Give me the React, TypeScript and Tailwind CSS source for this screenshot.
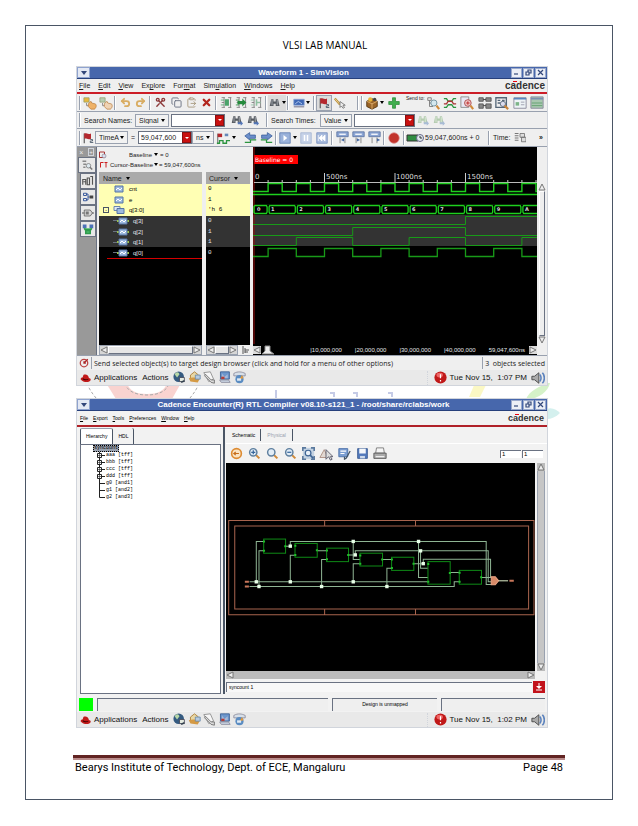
import React, { useState } from "react";
import clsx from "clsx";
import { Scissors, Copy, ClipboardPaste, X, Undo2, Redo2 } from "lucide-react";

const NS = 0.141;
const END = 284;

const Glyph: React.FC<{ children: React.ReactNode; className?: string }> = ({ children, className }) => (
  <svg viewBox="0 0 16 16" className={clsx("shrink-0", className ?? "size-3")} fill="none">
    {children}
  </svg>
);

const Binoculars = ({ dim = false, arrow = true }: { dim?: boolean; arrow?: boolean }) => (
  <Glyph>
    <path d="M3 3h3v3h3V3h3l2 9H9V9H6v3H1z" fill={dim ? "#b4ccb0" : "#555a60"} />
    <path d="M4 4v7M11 4v7" stroke={dim ? "#e4eee2" : "#b8bcc2"} />
    {arrow && <path d="M9 11h4v-2l3 3.500-3 3v-2H9z" fill={dim ? "#a9bcd6" : "#5577b8"} />}
  </Glyph>
);

const Magnifier = ({ sign }: { sign?: string }) => (
  <Glyph className="size-[13px]">
    <path d="m10 10 4 4" stroke="#d08a3a" strokeWidth="2.500" />
    <circle cx="6.500" cy="6.500" r="4.500" fill="#e2edf7" stroke="#5e7f9f" strokeWidth="1.800" />
    {sign && <path d={sign} stroke="#35659c" strokeWidth="1.500" />}
  </Glyph>
);

const Flag = () => (
  <Glyph>
    <path d="M3 2v13" stroke="#555" strokeWidth="1.500" />
    <path d="M3 2c3-1 5 2 9 0v7c-4 2-6-1-9 0z" fill="#b5282e" />
    <path d="M11 10h3v2h-3v2h4" stroke="#345" />
  </Glyph>
);

const Hand = ({ faded = false }: { faded?: boolean }) => (
  <Glyph className="size-[14px]">
    <path d="M1 2h6v5H1z" fill={faded ? "#b6cdb2" : "#e8ba3e"} stroke="#8f9a68" strokeWidth=".8" />
    <path d="M4 8v3h3" stroke="#888" />
    <path d="M6 9l3-3 1 2 4 1c2 1 1 5-1 6H9l-3-3z" fill={faded ? "#efd3b4" : "#efb267"} stroke="#b77a3a" strokeWidth=".8" />
  </Glyph>
);

const Align = ({ color, kind }: { color: string; kind: number }) => (
  <Glyph className="size-[13px]">
    <path d="M2 2h4M2 8h3M2 14h4M10 2h4M10 14h4M5 2v12M13 2v12" stroke="#777" />
    <path
      d={kind === 0 ? "M6 4h5v8H6z" : kind === 1 ? "M3 6h6V3l5 5-5 5v-3H3z" : "M7 4h2v3h4v2H9v3H7z"}
      fill={color}
    />
    <path d="M1 5h4M1 11h4" stroke={color} />
  </Glyph>
);

const Pointer = () => (
  <Glyph>
    <path d="M1 2l7 8" stroke="#b98d32" strokeWidth="3" />
    <path d="M1 2l7 8" stroke="#f0ddb0" strokeWidth="1" />
    <path d="M8 6v8l2-2 2 3 2-1-2-3h3z" fill="#eee" stroke="#666" />
  </Glyph>
);

const StepIcon = ({ dir }: { dir: string }) => (
  <Glyph className="size-[13px]">
    <path d="M1 1h14v6H1z" fill="#8ba5d4" stroke="#57709e" />
    <path d="M4 4h8" stroke="#fff" strokeWidth="1.500" />
    <path d="M5 8v7M11 8v7" stroke="#777" />
    <path d={dir} fill="#4468a4" />
  </Glyph>
);

const Sep = () => <span className="mx-px h-3.5 w-0.5 shrink-0 border-l border-gray-400 bg-white" />;
const Caret = () => <span className="block h-0 w-0 shrink-0 border-x-2 border-t-3 border-x-transparent border-t-black" />;

const ToolButton: React.FC<{ label: string; children: React.ReactNode; className?: string }> = ({ label, children, className }) => (
  <button aria-label={label} className={clsx("flex h-4 shrink-0 items-center justify-center", className ?? "w-4")}>
    {children}
  </button>
);

const Select: React.FC<{ id: string; label: string; options: string[]; className: string }> = ({ id, label, options, className }) => (
  <span className={clsx("relative flex h-[13px] shrink-0 items-center border border-gray-400 bg-[#f2f2f2]", className)}>
    <select id={id} aria-label={label} className="h-full w-full appearance-none bg-transparent pl-[3px] leading-none outline-none">
      {options.map(o => <option key={o}>{o}</option>)}
    </select>
    <span className="pointer-events-none absolute inset-y-0 right-[3px] flex items-center"><Caret /></span>
  </span>
);

const Entry: React.FC<{ label: string; initial?: string; className: string }> = ({ label, initial = "", className }) => {
  const [value, setValue] = useState(initial);
  return (
    <span className={clsx("flex h-[13px] shrink-0 items-center border border-gray-500 bg-white", className)}>
      <input
        aria-label={label}
        value={value}
        onChange={e => setValue(e.target.value)}
        className="h-full min-w-0 flex-1 pl-0.5 leading-none outline-none"
      />
      <button aria-label={`${label} history`} className="flex h-full w-[9px] items-center justify-center border border-[#8a1010] bg-[#c91010]">
        <span className="h-0 w-0 border-x-2 border-t-2 border-x-transparent border-t-white" />
      </button>
    </span>
  );
};

const TitleBar = ({ title }: { title: string }) => (
  <header className="flex h-3 items-center border-b border-[#27407c] bg-[#4767ac] text-white">
    <button aria-label="Window menu" className="flex h-full w-[13px] items-center justify-center border border-[#8fa3cf] bg-[#e4e9f4]">
      <svg viewBox="0 0 6 4" className="h-1 w-1.5"><path d="M0 0h6L3 4z" fill="#33477a" /></svg>
    </button>
    <h2 className="flex-1 pl-1.5 text-center text-[8px] leading-none font-bold">{title}</h2>
    {["M1 5h4", "M1 3h3v3H1zM3 3V1h3v3H4", "M1 1l5 5M6 1L1 6"].map((d, i) => (
      <button key={d} aria-label={["Minimize", "Restore", "Close"][i]} className="mr-px flex h-2.5 w-[11px] items-center justify-center border border-[#9aa9cc] bg-[#eceff6]">
        <svg viewBox="0 0 7 7" className="size-[7px]" fill="none"><path d={d} stroke="#33477a" strokeWidth="1.200" /></svg>
      </button>
    ))}
  </header>
);

const Logo = ({ className }: { className: string }) => (
  <span className={clsx("ml-auto leading-none font-bold text-[#333]", className)}>
    c<span className="relative">a<span className="absolute top-px left-0.5 h-px w-[4px] bg-red-600" /></span>dence
  </span>
);

const MenuBar: React.FC<{ items: [string, number][]; className: string }> = ({ items, className }) => (
  <nav className={clsx("flex items-center", className)}>
    {items.map(([text, n]) => (
      <button key={text}>
        {text.slice(0, n)}<u>{text[n]}</u>{text.slice(n + 1)}
      </button>
    ))}
  </nav>
);

const Taskbar = ({ time }: { time: string }) => (
  <footer className="flex h-[15px] items-center bg-[#e9e9e9] text-[8px] text-[#111]">
    <Glyph className="mx-[3px] h-3 w-[11px]">
      <path d="M1 10c0-3 2-2 3-3 1-5 2-4 4-4s4 1 5 5c3 1 3 2 2 4-3 3-11 2-14-2z" fill="#c11a1a" />
      <path d="M4 9c2 2 5 2 8 1" stroke="#400" strokeWidth="1.500" />
    </Glyph>
    <button>Applications</button>
    <button className="mr-1 ml-[5px]">Actions</button>
    <div className="flex gap-px">
      <ToolButton label="Browser" className="w-[14px]">
        <Glyph className="size-[13px]">
          <circle cx="7" cy="7" r="6.500" fill="#345a80" /><path d="M2 4c3-4 5-2 6 0L5 8z" fill="#b8d8a8" />
          <path d="M8 8h6v5H8z" fill="#e4eae0" stroke="#445" /><path d="M10 14l4-2" stroke="#34424f" strokeWidth="2" />
        </Glyph>
      </ToolButton>
      <ToolButton label="Mail" className="w-[14px]">
        <Glyph className="size-[13px]">
          <path d="M3 5l5-4 5 4v6H3z" fill="#e8d7a5" stroke="#a6772c" /><path d="M1 9c4-2 9-1 13 1l-2 4-9-1z" fill="#d49a45" />
          <path d="M9 5h6v5H9z" fill="#b6cbe0" stroke="#6888a8" />
        </Glyph>
      </ToolButton>
      <ToolButton label="Writer" className="w-[14px]">
        <Glyph className="size-[13px]">
          <path d="M1 2l8-1 4 9-6 3z" fill="#f6f6f6" stroke="#888" /><path d="M3 4l7 7h4v4l-4-1-8-8z" fill="#ddd" stroke="#666" />
        </Glyph>
      </ToolButton>
      <ToolButton label="Presentation" className="w-[14px]">
        <Glyph className="size-[13px]">
          <path d="M3 1h11v9H3z" fill="#6d97cc" stroke="#33588d" /><path d="M5 3l3 4 4-3v5H5z" fill="#a5b9d8" /><path d="M4 7h4v3H4z" fill="#b53d36" /><path d="M2 11h11l2 3H4z" fill="#c8d3e2" stroke="#889" />
        </Glyph>
      </ToolButton>
      <ToolButton label="Spreadsheet" className="w-[14px]">
        <Glyph className="size-[13px]">
          <path d="M1 3c5-3 10-2 14 0v3H1z" fill="#d7dfe8" stroke="#889" /><circle cx="8" cy="10" r="5" fill="#5a8cc2" /><path d="M8 10l3-5 2 4z" fill="#e29a3c" /><path d="M5 9h5v3H5z" fill="#e1ebf5" />
        </Glyph>
      </ToolButton>
    </div>
    <span className="ml-auto mr-0.5 h-3.5 border-l border-dotted border-gray-300" />
    <Glyph className="mr-0.5 ml-1 size-[13px]">
      <circle cx="8" cy="8" r="7.500" fill="#c01818" /><ellipse cx="7" cy="5" rx="4" ry="3" fill="#e66" /><path d="M8 4v5M8 11v2" stroke="#fff" strokeWidth="1.500" />
    </Glyph>
    <time className="whitespace-pre">{time}</time>
    <Glyph className="mr-0.5 ml-1 size-[14px]">
      <path d="M1 6h3l5-4v12l-5-4H1z" fill="#aaa" stroke="#444" /><path d="M10 4c2 2 2 6 0 8M13 2c3 3 3 9 0 12" stroke="#5b82bd" strokeWidth="1.800" />
    </Glyph>
  </footer>
);

// square wave that starts low and flips at every listed time
function wave(toggles: number[], low: number, high: number) {
  let level = low;
  let d = `M0 ${low}`;
  toggles.forEach(t => {
    level = level === low ? high : low;
    d += `H${t * NS + 1}V${level}`;
  });
  return `${d}H${END}`;
}

const everyHundred = Array.from({ length: 20 }, (_, i) => (i + 1) * 100);
const busTimes = [100, 300, 500, 700, 900, 1100, 1300, 1500, 1700, 1900];

const Waveform = () => (
  <svg viewBox="0 0 284 197" preserveAspectRatio="xMinYMin slice" className="h-[197px] w-full bg-black font-['DejaVu_Sans']" fill="none">
    <path d="M0 68h284v31H0z" fill="#333" />
    <path d="M1 8h44v9H1z" fill="#f00" />
    <text x="2" y="15" fontSize="6" fill="#fff">Baseline = 0</text>
    <path d="M1 0v197" stroke="#a01010" />
    <path d="M1 35.500h283" stroke="#bbb" />
    {everyHundred.map(t => <path key={t} d={`M${t * NS + 1} ${t % 500 || t === 2000 ? 33 : 26}V36`} stroke="#ccc" />)}
    <g fill="#ddd" fontSize="7">
      <text x="2" y="32">0</text>
      <text x="73" y="32">500ns</text>
      <text x="143" y="32">1000ns</text>
      <text x="214" y="32">1500ns</text>
    </g>
    <g stroke="#1ed01e" strokeWidth="1.400">
      <path d={wave(everyHundred, 44.5, 36.5)} />
      <path d="M0 47.500h284" />
      <path d="M1 62V59.500L2 58.500H284M1 62V65.500L2 66.500H284" />
    </g>
    {busTimes.map(t => (
      <g key={t}>
        <path d={`M${t * NS - 1} 57.500h4v10h-4z`} fill="#000" />
        <path d={`M${t * NS - 1} 58l1 2v5l-1 2M${t * NS + 3} 58l-1 2v5l1 2`} stroke="#1ed01e" strokeWidth="1.300" />
      </g>
    ))}
    <g fill="#ddd" fontSize="5" fontWeight="bold">
      <text x="4" y="64">0</text>
      {busTimes.map((t, i) => <text key={t} x={t * NS + 4} y="64">{(i + 1).toString(16).toUpperCase()}</text>)}
    </g>
    <g stroke="#189a18">
      <path d={wave([1500], 77.5, 69.5)} />
      <path d={wave([700, 1500], 88.5, 80.5)} />
      <path d={wave([300, 700, 1100, 1500, 1900], 98.5, 90.5)} />
      <path d={wave(busTimes, 109.5, 101.5)} strokeWidth="1.300" />
    </g>
  </svg>
);

const ScrollArrow = ({ d }: { d: string }) => (
  <svg viewBox="0 0 8 8" className="size-2 shrink-0"><path d={d} fill="#eee" stroke="#777" /></svg>
);
const LEFT = "M7 1v6L1 4z";
const RIGHT = "M1 1v6l6-3z";
const UP = "M1 7h6L4 1z";
const DOWN = "M1 1h6L4 7z";

const HScroll = ({ className }: { className?: string }) => (
  <div className={clsx("flex h-2.5 items-center border border-gray-400 bg-[#d6d6d6]", className)}>
    <ScrollArrow d={LEFT} />
    <span className="h-2 flex-1 border border-t-white border-l-white border-r-gray-500 border-b-gray-500 bg-[#e6e6e6]" />
    <ScrollArrow d={RIGHT} />
  </div>
);

const signals = [
  { name: "cnt", value: "0" },
  { name: "e", value: "1" },
  { name: "q[3:0]", value: "'h 6" },
  { name: "q[3]", value: "0" },
  { name: "q[2]", value: "1" },
  { name: "q[1]", value: "1" },
  { name: "q[0]", value: "0" },
];

const rowTone = (i: number) => (i < 3 ? "bg-[#ffffb4] text-black" : i < 6 ? "bg-[#333] text-gray-200" : "bg-black text-gray-200");

const SignalIcon = ({ kind }: { kind: "scalar" | "bus" | "bit" }) => (
  <svg viewBox="0 0 12 8" className="h-2 w-3 shrink-0" fill="none">
    {kind === "bit" && <path d="M0 4h12" stroke="#9ac04a" strokeWidth="2" />}
    {kind === "bus" && <path d="M1 .5h6v4H1z" fill="#dfe8f4" stroke="#6d86ad" />}
    <path d={kind === "bus" ? "M4 2.500h7v5H4z" : "M2 1h8v6H2z"} fill="#9db9df" stroke="#5674a4" />
    {kind !== "bus" && <path d="M3 5l2-2 2 2 2-2" stroke="#fff" />}
  </svg>
);

const railTabs = [
  <><path d="M2 3h5M3 7h4M3 11h3" stroke="#888" strokeWidth="2" /><circle cx="10" cy="9" r="3" fill="#dde8ee" stroke="#777" /><path d="M12 11l3 3" stroke="#777" strokeWidth="2" /></>,
  <><path d="M1 13V6h4v7M7 4h3v9H7zM11 2h3v11M2 9h3" stroke="#555" strokeWidth="1.500" /></>,
  <><path d="M2 3h4v3H2zM2 10h4v3H2zM6 4h2v8H6M8 8h2" stroke="#37569b" strokeWidth="1.300" /><path d="M10 6h5v4h-5z" fill="#444" /></>,
  <><path d="M0 8h16" stroke="#888" strokeWidth="2" /><path d="M3 4h8l3 4-3 4H3z" fill="#d6d6d6" stroke="#555" /><path d="M5 6h4v4H5z" fill="#777" /></>,
  <><path d="M1 2h5v5H1z" fill="#4c72b8" /><path d="M10 2h5v5h-5z" fill="#4c72b8" /><path d="M3 7l2 3h6l2-3M5 9h6v5H5z" stroke="#2e9b4c" strokeWidth="2" fill="#48b868" /></>,
];

const SimVision = () => (
  <section className="border border-gray-300 bg-[#efefef] text-[7px] leading-none text-[#222]">
    <TitleBar title="Waveform 1 - SimVision" />
    <div className="flex h-[15px] items-center border-b-2 border-[#cc1d27] px-0.5">
      <MenuBar
        className="gap-2"
        items={[["File", 0], ["Edit", 0], ["View", 0], ["Explore", 2], ["Format", 3], ["Simulation", 3], ["Windows", 0], ["Help", 0]]}
      />
      <Logo className="text-[10px]" />
    </div>

    <div className="flex h-[18px] items-center border-b border-gray-400 pl-px">
      <Sep />
      <ToolButton label="Send"><Hand /></ToolButton>
      <ToolButton label="Receive" className="w-[15px]"><Hand faded /></ToolButton>
      <Sep />
      <ToolButton label="Undo"><Undo2 className="size-[11px] text-[#d9ad63]" strokeWidth={4} /></ToolButton>
      <ToolButton label="Redo" className="w-[15px]"><Redo2 className="size-[11px] text-[#d9ad63]" strokeWidth={4} /></ToolButton>
      <Sep />
      <ToolButton label="Cut"><Scissors className="size-[11px] rotate-90 text-[#8d3a3a]" strokeWidth={3} /></ToolButton>
      <ToolButton label="Copy"><Copy className="size-[11px] text-gray-500" /></ToolButton>
      <ToolButton label="Paste" className="w-[15px]"><ClipboardPaste className="size-[11px] text-[#a99a80]" /></ToolButton>
      <ToolButton label="Delete" className="w-[15px]"><X className="size-[11px] text-[#b3261e]" strokeWidth={5} /></ToolButton>
      <Sep />
      <ToolButton label="Expand"><Align color="#4aa36a" kind={0} /></ToolButton>
      <ToolButton label="Move in" className="w-[15px]"><Align color="#258a3c" kind={1} /></ToolButton>
      <ToolButton label="Insert" className="w-[15px]"><Align color="#8fc0a0" kind={2} /></ToolButton>
      <Sep />
      <ToolButton label="Find" className="w-[18px] gap-px bg-[#dcdcdc]"><Binoculars arrow={false} /><Caret /></ToolButton>
      <Sep />
      <ToolButton label="Windows" className="w-[22px] gap-px">
        <Glyph><path d="M1 3h14v8H1z" fill="#3f68b5" stroke="#92a9d4" /><path d="M3 9l4-3 5 3" stroke="#cfe0fa" /><path d="M1 13h14" stroke="#99a" strokeWidth="2" /></Glyph>
        <Caret />
      </ToolButton>
      <Sep />
      <ToolButton label="Marker" className="w-4 border border-gray-400 bg-[#dcdcdc]"><Flag /></ToolButton>
      <ToolButton label="Edit mode" className="w-4"><Pointer /></ToolButton>
      <span className="w-2" />
      <Sep />
      <Sep />
      <ToolButton label="Package" className="w-5 gap-px">
        <Glyph className="size-[14px]"><path d="M2 6l6-3 6 3v6l-6 3-6-3z" fill="#9a6528" stroke="#543510" /><path d="M2 6l6 3 6-3M8 9v6" stroke="#e0b070" /><circle cx="6" cy="4" r="2.500" fill="#e6b53a" /><circle cx="11" cy="4" r="2" fill="#444" /></Glyph>
        <Caret />
      </ToolButton>
      <ToolButton label="Add" className="w-5">
        <Glyph><path d="M6 1h4v5h5v4h-5v5H6v-5H1V6h5z" fill="#3fae4d" stroke="#2f8c3c" /></Glyph>
      </ToolButton>
      <span className="self-start pt-0.5 pl-0.5 text-[5px] whitespace-nowrap">Send to:</span>
      <div className="flex flex-1 justify-between pr-0.5">
        <ToolButton label="Design browser"><Glyph className="size-[14px]"><path d="M2 2h4v3H2zM4 5v7h4M4 8h4" stroke="#777" /><circle cx="9" cy="8" r="3.500" fill="#d5e8ef" stroke="#6b8b99" /><path d="M12 11l3 4" stroke="#d08a3a" strokeWidth="2.500" /></Glyph></ToolButton>
        <ToolButton label="Waveform"><Glyph className="size-[14px]"><path d="M1 3h3l2 3h4l2-3h3M1 13h3l2-3h4l2 3h3" stroke="#2c9440" strokeWidth="1.500" /><path d="M1 9h3l2-3h4l2 3h3" stroke="#a93232" strokeWidth="1.500" /></Glyph></ToolButton>
        <ToolButton label="Source"><Glyph className="size-[14px]"><path d="M1 1h9v12H1z" fill="#e8e8f4" stroke="#888" /><circle cx="9" cy="8" r="3.800" fill="#f0caca" stroke="#a44" /><path d="M7 8h4M9 6v4" stroke="#b22" /><path d="M12 11l3 4" stroke="#d08a3a" strokeWidth="2.500" /></Glyph></ToolButton>
        <ToolButton label="Schematic"><Glyph className="size-[14px]"><path d="M1 2h5v4H1zM9 2h6v4H9zM1 9h5v5H1zM9 9h6v5H9z" fill="#888" stroke="#555" /><path d="M6 4h3M6 11h3" stroke="#333" /></Glyph></ToolButton>
        <ToolButton label="Register"><Glyph className="size-[14px]"><path d="M1 2h12v11H1zM3 5h3M3 8h3M8 5h3" stroke="#567" strokeWidth="1.500" /><circle cx="9" cy="9" r="3" fill="#dde" stroke="#567" /><path d="M11 11l4 4" stroke="#c9843a" strokeWidth="2.500" /></Glyph></ToolButton>
        <ToolButton label="Memory"><Glyph className="size-[14px]"><path d="M1 2h14v12H1z" fill="#eef3f6" stroke="#889" /><path d="M1 3h14" stroke="#5a86c0" strokeWidth="2" /><path d="M3 7h4v4H3z" fill="#7cb487" /><path d="M9 7h4M9 10h4" stroke="#99a" /></Glyph></ToolButton>
        <ToolButton label="Watch"><Glyph className="size-[14px]"><path d="M1 1h14v13H1z" fill="#a9c7b0" stroke="#889" /><path d="M1 3h14" stroke="#7b8fb0" strokeWidth="2" /><path d="M2 8h12M2 11h12" stroke="#5fa06c" /></Glyph></ToolButton>
      </div>
    </div>

    <div className="flex h-[17px] items-center border-b border-gray-400 pl-px">
      <Sep />
      <label htmlFor="search-names" className="ml-0.5 w-[51px] whitespace-nowrap">Search Names:</label>
      <Select id="search-names" label="Search Names" options={["Signal", "Scope"]} className="w-[34px]" />
      <Entry label="Name" className="ml-0.5 w-[54px]" />
      <div className="ml-1 flex">
        <ToolButton label="Find next name"><Binoculars /></ToolButton>
        <ToolButton label="Find previous name"><Binoculars /></ToolButton>
      </div>
      <span className="w-1" />
      <Sep />
      <label htmlFor="search-times" className="ml-0.5 w-[49px] whitespace-nowrap">Search Times:</label>
      <Select id="search-times" label="Search Times" options={["Value", "Edge"]} className="w-[32px]" />
      <Entry label="Value" className="ml-0.5 w-[61px]" />
      <div className="flex">
        <ToolButton label="Find next value"><Binoculars dim /></ToolButton>
        <ToolButton label="Find previous value"><Binoculars dim /></ToolButton>
      </div>
    </div>

    <div className="flex h-[18px] items-center border-b border-gray-400 pl-px">
      <Sep />
      <Flag />
      <Select id="cursor" label="Cursor" options={["TimeA"]} className="ml-px w-[33px]" />
      <span className="mx-[3px]">=</span>
      <Entry label="Time value" initial="59,047,600" className="w-[54px]" />
      <Select id="unit" label="Unit" options={["ns", "ps"]} className="w-[22px]" />
      <ToolButton label="Zoom to cursors" className="w-6 gap-0.5">
        <Glyph className="size-[14px]"><path d="M2 3v12" stroke="#555" /><path d="M2 3h5v4H2z" fill="#b5282e" /><path d="M1 14h3v-3h4v3h4v-3h4" stroke="#2c9440" strokeWidth="1.500" /><path d="M10 3h4v3h-4z" fill="#6688b8" /></Glyph>
        <Caret />
      </ToolButton>
      <span className="w-1" />
      <ToolButton label="Previous edge"><Glyph className="size-[13px]"><path d="M1 6l6-4v3h7v4H7v2z" fill="#6c8fcb" stroke="#3f619c" /><path d="M1 14h7v-3h7" stroke="#2c9440" strokeWidth="1.500" /></Glyph></ToolButton>
      <ToolButton label="Next edge"><Glyph className="size-[13px]"><path d="M15 6L9 2v3H2v4h7v2z" fill="#6c8fcb" stroke="#3f619c" /><path d="M1 11h7v3h7" stroke="#2c9440" strokeWidth="1.500" /></Glyph></ToolButton>
      <Sep />
      <ToolButton label="Run" className="w-5 gap-0.5"><Glyph><path d="M1 1h14v14H1z" fill="#9bb2da" stroke="#5877ac" /><path d="M6 4v8l5-4z" fill="#fff" /></Glyph><Caret /></ToolButton>
      <ToolButton label="Pause"><Glyph><path d="M1 1h14v14H1z" fill="#c6d2e8" stroke="#9fb0cf" /><path d="M6 4v8M10 4v8" stroke="#fff" strokeWidth="2" /></Glyph></ToolButton>
      <ToolButton label="Restart"><Glyph><path d="M1 1h14v14H1z" fill="#a8bbdd" stroke="#6b86b8" /><path d="M12 4v8L8 8zM8 4v8L4 8zM3 4v8" fill="#fff" stroke="#fff" /></Glyph></ToolButton>
      <Sep />
      <ToolButton label="Step"><StepIcon dir="M6 11l4-2v4z" /></ToolButton>
      <ToolButton label="Step over"><StepIcon dir="M10 11L6 9v4z" /></ToolButton>
      <ToolButton label="Step out"><StepIcon dir="M15 11l-4-2v4z" /></ToolButton>
      <Sep />
      <ToolButton label="Stop"><Glyph><circle cx="8" cy="8" r="7" fill="#c2342c" stroke="#d88" /></Glyph></ToolButton>
      <Sep />
      <svg viewBox="0 0 18 8" className="mr-px h-2 w-[18px] shrink-0" fill="none">
        <path d="M1 1h11v6H1z" fill="#2f8d42" stroke="#333" /><circle cx="14" cy="4" r="3.500" fill="#dfe8ee" stroke="#668" /><path d="M14 2v2h2" stroke="#333" />
      </svg>
      <span className="w-[62px] whitespace-nowrap">59,047,600ns + 0</span>
      <Sep />
      <span className="ml-0.5 mr-1">Time:</span>
      <Glyph><path d="M1 2h5M1 5h5M1 8h5M1 11h5" stroke="#777" strokeWidth="1.500" /><path d="M8 2h6v5H8zM10 7h6v6h-6z" fill="#ddd" stroke="#666" /></Glyph>
      <span className="mr-1 ml-auto font-bold">»</span>
    </div>

    <div className="flex h-[208px]">
      <div className="flex w-5 shrink-0 flex-col items-end border-r border-gray-500 bg-[#999]">
        <div className="flex h-2.5 w-full items-center justify-around text-[#eee]"><span>×</span><span className="border border-gray-300 text-[6px]">+</span></div>
        {railTabs.map((icon, i) => (
          <button key={i} aria-label={`Sidebar ${i + 1}`} className={clsx("flex h-4 items-center justify-center border border-gray-500 bg-[#e8e8e8]", i ? "w-4" : "w-[18px]")}>
            <Glyph>{icon}</Glyph>
          </button>
        ))}
      </div>
      <div className="flex w-[156px] shrink-0 flex-col pl-0.5">
        <div className="flex h-[25px] flex-col justify-center gap-0.5 text-[6px]">
          <div className="flex items-center gap-0.5">
            <Glyph className="mr-5 size-2"><path d="M1 2h10v11H1z" stroke="#a33" strokeWidth="2" /><circle cx="10" cy="10" r="4" fill="#dde" stroke="#667" /></Glyph>
            Baseline<Caret />= 0
          </div>
          <div className="flex items-center gap-px whitespace-nowrap">
            <Glyph className="h-2 w-2.5"><path d="M1 13V3h6M9 3h6M12 3v10" stroke="#c22" strokeWidth="2" /></Glyph>
            Cursor-Baseline<Caret />= 59,047,600ns
          </div>
        </div>
        <div className="flex flex-1 gap-1">
          <div className="flex w-[103px] flex-col bg-black">
            <div className="flex h-3 items-center gap-1 bg-[#aaa] pl-1 text-[7px]">Name <Caret /></div>
            <ul className="grid h-[74px] grid-rows-7">
              {signals.map(({ name }, i) => (
                <li key={name} className={clsx("flex items-center gap-1 text-[6px]", rowTone(i))}>
                  <span className="flex w-2.5 justify-end">
                    {i === 2 && <span className="flex size-[6px] items-center justify-center border border-gray-600 text-[5px]">-</span>}
                  </span>
                  <span className={clsx("-mr-1 h-px", i < 3 ? "w-0" : "w-1 bg-gray-500")} />
                  <SignalIcon kind={i < 2 ? "scalar" : i === 2 ? "bus" : "bit"} />
                  {name}
                </li>
              ))}
            </ul>
            <div className="ml-2 h-px bg-[#d40000]" />
            <HScroll className="mt-auto" />
          </div>
          <div className="flex w-[44px] flex-col bg-black">
            <div className="flex h-3 items-center gap-1 bg-[#aaa] pl-[3px] text-[7px]">Cursor <Caret /></div>
            <ul className="grid h-[74px] grid-rows-7 font-['Liberation_Mono']">
              {signals.map(({ name, value }, i) => (
                <li key={name} className={clsx("flex items-center pl-0.5 text-[6px] whitespace-pre", rowTone(i))}>{value}</li>
              ))}
            </ul>
            <div className="mt-auto flex items-center bg-[#efefef]">
              <HScroll className="w-8" />
              <svg viewBox="0 0 8 8" className="ml-1 size-2"><path d="M1 0v8M3 2v5M3 4h4M3 6h3" stroke="#555" /></svg>
            </div>
          </div>
        </div>
      </div>
      <div className="flex min-w-0 flex-1 flex-col">
        <div className="flex">
          <div className="min-w-0 flex-1"><Waveform /></div>
          <div className="mx-px flex w-2 flex-col items-center pt-9">
            <ScrollArrow d={UP} />
            <span className="w-1.5 flex-1 border border-t-white border-l-white border-r-gray-500 border-b-gray-500 bg-[#eee]" />
            <ScrollArrow d={DOWN} />
          </div>
        </div>
        <div className="mr-2.5 flex h-[11px] items-center bg-black text-[6px] text-gray-200">
          <span className="bg-[#ddd]"><ScrollArrow d={LEFT} /></span>
          <svg viewBox="0 0 14 10" className="h-2.5 w-[14px]"><path d="M1 9l3-3V1h5v5l4 3z" fill="#eee" stroke="#888" /></svg>
          <div className="ml-auto flex gap-[13px] pr-1 whitespace-nowrap">
            {["|10,000,000", "|20,000,000", "|30,000,000", "|40,000,000"].map(t => <span key={t}>{t}</span>)}
            <span>59,047,600ns</span>
          </div>
          <span className="bg-[#ddd]"><ScrollArrow d={RIGHT} /></span>
        </div>
      </div>
    </div>

    <div className="flex h-[15px] items-center border-t border-gray-400 font-['Open_Sans']">
      <Glyph className="mx-0.5 size-2.5"><circle cx="8" cy="8" r="6" fill="#eee" stroke="#b44" strokeWidth="2" /><path d="M14 2L8 8M8 5v3h3" stroke="#a22" strokeWidth="2" /></Glyph>
      <span className="flex h-3 flex-1 items-center border-l border-gray-400 pl-0.5 whitespace-nowrap">
        Send selected object(s) to target design browser (click and hold for a menu of other options)
      </span>
      <span className="flex h-3 items-center border-l border-gray-400 px-0.5">3&nbsp; objects selected</span>
    </div>
    <Taskbar time="Tue Nov 15,  1:07 PM" />
  </section>
);

const nodes: [number, number, number, number][] = [
  [132, 85, 65, 42], [225, 98, 66, 41], [319, 112, 65, 40], [418, 127, 67, 38],
  [512, 139, 66, 39], [620, 152, 66, 67], [713, 178, 66, 41],
];
const joints: [number, number][] = [
  [110, 212], [118, 226], [211, 106], [211, 212], [304, 226], [398, 92], [398, 212],
  [404, 132], [498, 226], [592, 92], [598, 120], [606, 158],
];

const Schematic = () => (
  <svg viewBox="0 0 918 624" preserveAspectRatio="xMinYMin slice" className="h-[208px] w-full bg-black" fill="none">
    <g transform="translate(-20 141)" strokeWidth="3">
      <path d="M28 30H935V310H28zM46 46H919V293H46zM313 30v16M583 30v16M313 293v17M583 293v17" stroke="#a8644e" />
      <g stroke="#8fb594">
        <path d="M90 212H620M90 226H698V212H713M110 212V92H132M118 226V120H132" />
        <path d="M197 106H211V92H793V220H808M211 212V133H225M291 120H319M304 226V146H319" />
        <path d="M384 132H404V120H799V212H808M398 92V146H418M398 212V158H418M485 146H512M498 226V172H512" />
        <path d="M578 158H606V145H806V200M592 92V199H620M598 120V172H620M686 184H713M779 199H808" />
      </g>
      {nodes.map(([x, y, w, h]) => (
        <g key={x}>
          <rect x={x} y={y} width={w} height={h} stroke="#0e8a16" />
          <path d={`M${x - 2} ${y + 7}h6M${x - 2} ${y + h - 7}h6M${x + w - 4} ${y + h / 2}h6`} stroke="#1ec028" strokeWidth="6" />
        </g>
      ))}
      {joints.map(([x, y]) => <rect key={`${x}-${y}`} x={x - 5} y={y - 5} width="10" height="10" fill="#e8ffe8" />)}
      <path d="M76 212h12M76 226h12M862 209h13" stroke="#c8765a" strokeWidth="6" />
      <path d="M808 197h12l10 12-10 12h-12z" fill="#d88a68" stroke="#eba585" />
      <path d="M830 209h28" stroke="#e0efc8" />
    </g>
  </svg>
);

const tree = ["aaa [tff]", "bbb [tff]", "ccc [tff]", "ddd [tff]", "g0 [and1]", "g1 [and2]", "g2 [and3]"];

const RtlCompiler = () => {
  const [tab, setTab] = useState("Hierarchy");
  return (
    <section className="border border-gray-300 bg-[#f2f2f2] text-[5px] leading-none text-black">
      <TitleBar title="Cadence Encounter(R) RTL Compiler v08.10-s121_1 - /root/share/rclabs/work" />
      <div className="flex h-4 items-center border-b-2 border-[#b02128] px-[3px]">
        <MenuBar className="gap-[5px]" items={[["File", 0], ["Export", 0], ["Tools", 0], ["Preferences", 0], ["Window", 0], ["Help", 0]]} />
        <Logo className="text-[9px]" />
      </div>
      <div className="flex h-[267px]">
        <div className="flex w-[148px] shrink-0 flex-col border-r-2 border-gray-600 pt-px pr-0.5 pl-[3px]">
          <div className="flex h-4">
            {["Hierarchy", "HDL"].map(t => (
              <button key={t} onClick={() => setTab(t)} className={clsx("h-4 rounded-t-xs border-r border-gray-600 px-[5px]", tab === t && "border-t border-t-gray-400 border-l bg-white")}>
                {t}
              </button>
            ))}
          </div>
          <div className="flex-1 border border-gray-500 bg-white pl-3">
            <div className="h-[7px] w-[26px] border border-dotted border-black bg-gray-400 font-['Liberation_Mono']">syncount</div>
            <ul className="ml-1 font-['Liberation_Mono']">
              {tree.map((t, i) => (
                <li key={t} className="flex h-[7px] items-center">
                  <svg viewBox="0 0 8 7" className="mr-px h-[7px] w-2" fill="none" stroke="#222">
                    <path d={i === 6 ? "M2.500 0v3.500H8" : "M2.500 0v7M2.500 3.500H8"} />
                    {i < 4 && <path d="M.5 1.500h4v4h-4z" fill="#fff" />}
                    {i < 4 && <path d="M1 3.500h3M2.500 2v3" strokeWidth=".6" />}
                  </svg>
                  {t}
                </li>
              ))}
            </ul>
          </div>
        </div>
        <div className="flex min-w-0 flex-1 flex-col pl-px">
          <div className="flex h-4 items-center pl-1.5">
            <button className="h-3 border-r border-gray-600 pr-[5px]">Schematic</button>
            <button className="h-3 border-r border-gray-600 px-1.5 text-gray-400">Physical</button>
          </div>
          <div className="flex h-5 items-center gap-[2px] border-t border-white pl-0.5">
            <ToolButton label="Back"><Glyph className="size-[13px]"><circle cx="8" cy="8" r="6" fill="#fae4c5" stroke="#dd8b32" strokeWidth="2" /><path d="M11 8H5l2-2M5 8l2 2" stroke="#c66d1c" strokeWidth="1.500" /></Glyph></ToolButton>
            <ToolButton label="Zoom in"><Magnifier sign="M4 6.5h5M6.500 4v5" /></ToolButton>
            <ToolButton label="Zoom"><Magnifier /></ToolButton>
            <ToolButton label="Zoom out"><Magnifier sign="M4 6.500h5" /></ToolButton>
            <ToolButton label="Fit"><Glyph className="size-[13px]"><path d="M1 1h14v14H1z" fill="#c3d2e2" /><path d="M1 5V1h4M11 1h4v4M15 11v4h-4M5 15H1v-4" stroke="#5b7a9e" strokeWidth="2" /><circle cx="7.500" cy="7.500" r="3.500" fill="#e8f0f8" stroke="#3d6494" strokeWidth="1.500" /><path d="M10 10l4 4" stroke="#3d6494" strokeWidth="2" /></Glyph></ToolButton>
            <ToolButton label="Select"><Glyph className="size-[14px]"><path d="M1 12l5-9 4 9z" fill="#e2d8d2" stroke="#aa8d80" /><path d="M8 3v11l3-3 2 4 2-1-2-3h3z" fill="#ddd" stroke="#556" /></Glyph></ToolButton>
            <ToolButton label="Edit"><Glyph className="size-[13px]"><path d="M1 2h11v10H1z" fill="#7c9fd2" stroke="#3f66a3" /><path d="M3 5h7M3 8h5" stroke="#fff" strokeWidth="1.500" /><path d="M15 5l-5 9-2 1v-3" stroke="#456" strokeWidth="1.500" /></Glyph></ToolButton>
            <ToolButton label="Save"><Glyph className="size-[13px]"><path d="M2 2h12v12H2z" fill="#5279bb" stroke="#36568e" /><path d="M4 2h8v6H4z" fill="#f4f7fb" /><path d="M5 11h6v3H5z" fill="#cdd9ea" /></Glyph></ToolButton>
            <ToolButton label="Print"><Glyph className="size-[14px]"><path d="M4 1h8l1 6H3z" fill="#f5f5f5" stroke="#777" /><path d="M1 7h14v6H1z" fill="#aaa" stroke="#555" /><path d="M3 11h10" stroke="#eee" strokeWidth="1.500" /></Glyph></ToolButton>
            <div className="mr-1 ml-auto flex gap-px">
              <input aria-label="Sheet" defaultValue="1" className="h-2 w-[21px] border-t border-l border-gray-500 bg-white pl-px text-[6px]" />
              <input aria-label="Sheet count" defaultValue="1" className="h-2 w-[21px] border-t border-l border-gray-500 bg-white pl-px text-[6px]" />
            </div>
          </div>
          <div className="flex h-[208px]">
            <div className="min-w-0 flex-1"><Schematic /></div>
            <div className="mx-0.5 flex w-2 flex-col bg-[#bbb]">
              <ScrollArrow d={UP} />
              <span className="flex-1 border-x border-gray-400 bg-[#c6c6c6]" />
              <ScrollArrow d={DOWN} />
            </div>
          </div>
          <div className="mr-3 flex h-2 shrink-0 items-center bg-[#bbb]"><ScrollArrow d={LEFT} /><span className="flex-1" /><ScrollArrow d={RIGHT} /></div>
          <div className="flex flex-1 items-center gap-px pr-0.5">
            <input aria-label="Selected instance" defaultValue="syncount 1" className="h-2.5 min-w-0 flex-1 border-t border-l border-gray-500 bg-[#f8f8f8] pl-0.5" />
            <button aria-label="Download" className="flex size-3 items-center justify-center bg-[#c2121b]">
              <svg viewBox="0 0 8 8" className="size-2" fill="none"><path d="M4 0v4M1 7h6" stroke="#fff" /><path d="M1 3h6L4 6z" fill="#fff" /></svg>
            </button>
          </div>
        </div>
      </div>
      <div className="flex h-[18px] items-center gap-1 px-0.5 pt-0.5">
        <span className="h-[13px] w-[14px] bg-[#00ff00]" />
        <span className="h-[13px] flex-1 border-t border-l border-gray-500 bg-[#efefef]" />
        <span className="flex h-[13px] w-[105px] items-center justify-center border-t border-l border-gray-500 bg-[#efefef]">Design is unmapped</span>
        <span className="h-[13px] w-[104px] border-t border-l border-gray-500 bg-[#efefef]" />
      </div>
      <Taskbar time="Tue Nov 15,  1:02 PM" />
    </section>
  );
};

const Watermark = () => (
  <svg viewBox="0 0 492 50" preserveAspectRatio="xMinYMin slice" className="absolute inset-x-0 top-[317px] -z-10 h-[50px] w-full" fill="none">
    <path d="M33 0l10 16h56l9-16h-14c-2 8-10 11-20 11s-18-3-20-11z" fill="#f9d3d0" />
    <path d="M52 0c2 9 12 12 22 12s20-3 22-12" stroke="#aaa" strokeDasharray="3 2" />
    <path d="M14 0c2 6 5 10 9 15M126 0c-2 6-5 10-9 15" stroke="#aaa" strokeDasharray="3 2" />
    <path d="M203 7v8M257 10h4v4M280 10h4v4M315 10h4v4" stroke="#c5cbe6" strokeWidth="2" />
    <path d="M402 0h12l-7 14h-11z" fill="#fbf8c4" />
    <path d="M475 0c-8 3-19 8-22 16 14 0 22-8 24-16z" fill="#d5f2c8" />
    <path d="M474 26c5-2 10 1 13 4-4 4-9 6-13 6z" fill="#d4f0ee" />
  </svg>
);

export default function App() {
  return (
    <div className="bg-white p-[25px] font-['Liberation_Sans',sans-serif] text-black">
      <main className="min-h-[775px] border border-gray-600 px-[47px] pt-3">
        <h1 className="pl-3 text-center font-['Open_Sans'] text-[10px] leading-[14px]">VLSI LAB MANUAL</h1>
        <div className="relative isolate mt-3.5">
          <Watermark />
          <div className="mr-[17px] ml-[3px] flex flex-col gap-3">
            <SimVision />
            <RtlCompiler />
          </div>
        </div>
        <footer className="mt-[27px]">
          <div className="border-t-3 border-b-2 border-t-[#622423] border-b-[#b98c8b]" />
          <div className="flex justify-between px-0.5 font-['Roboto'] text-[11px] leading-4">
            <span>Bearys Institute of Technology, Dept. of ECE, Mangaluru</span>
            <span>Page 48</span>
          </div>
        </footer>
      </main>
    </div>
  );
}
